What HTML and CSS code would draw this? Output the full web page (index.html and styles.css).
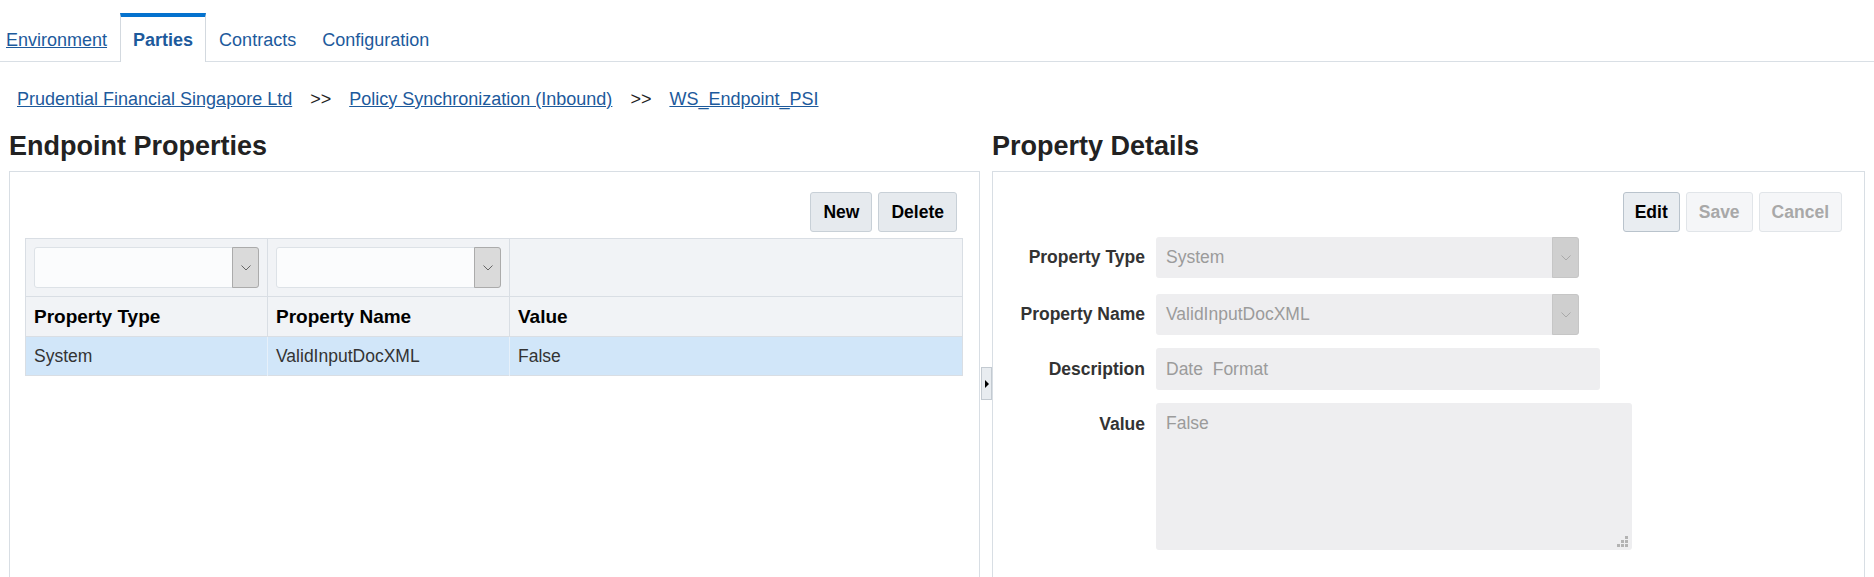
FILE: index.html
```html
<!DOCTYPE html>
<html>
<head>
  <title>Endpoint Properties</title>
  <link rel="stylesheet" href="styles.css">
</head>
<body>

  <nav class="tabs">
    <a class="tab first" href="#">Environment</a>
    <a class="tab active" href="#">Parties</a>
    <a class="tab" href="#">Contracts</a>
    <a class="tab" href="#">Configuration</a>
  </nav>

  <div class="crumbs">
    <a href="#">Prudential Financial Singapore Ltd</a><span class="sep">&gt;&gt;</span><a href="#">Policy Synchronization (Inbound)</a><span class="sep">&gt;&gt;</span><a href="#">WS_Endpoint_PSI</a>
  </div>

  <div class="main">

    <section class="col leftcol">
      <h2>Endpoint Properties</h2>
      <div class="panel">
        <div class="toolbar">
          <button>New</button>
          <button>Delete</button>
        </div>
        <table class="grid">
          <colgroup>
            <col class="c1">
            <col class="c2">
            <col>
          </colgroup>
          <tr class="filters">
            <td>
              <div class="select">
                <span class="seltext"></span>
                <span class="arrow"><svg width="10" height="6" viewBox="0 0 10 6"><path d="M0.5 0.5 L5 5 L9.5 0.5" fill="none" stroke="#666" stroke-width="1"/></svg></span>
              </div>
            </td>
            <td>
              <div class="select">
                <span class="seltext"></span>
                <span class="arrow"><svg width="10" height="6" viewBox="0 0 10 6"><path d="M0.5 0.5 L5 5 L9.5 0.5" fill="none" stroke="#666" stroke-width="1"/></svg></span>
              </div>
            </td>
            <td></td>
          </tr>
          <tr class="head">
            <th>Property Type</th>
            <th>Property Name</th>
            <th>Value</th>
          </tr>
          <tr class="row selected">
            <td>System</td>
            <td>ValidInputDocXML</td>
            <td>False</td>
          </tr>
        </table>
      </div>
    </section>

    <div class="splitter">
      <span class="toggle"><span class="tri"></span></span>
    </div>

    <section class="col rightcol">
      <h2>Property Details</h2>
      <div class="panel">
        <div class="toolbar">
          <button class="edit">Edit</button>
          <button disabled>Save</button>
          <button disabled>Cancel</button>
        </div>
        <form class="details">
          <label>Property Type</label>
          <div class="select off type">
            <span class="seltext">System</span>
            <span class="arrow"><svg width="10" height="6" viewBox="0 0 10 6"><path d="M0.5 0.5 L5 5 L9.5 0.5" fill="none" stroke="#a9a9a9" stroke-width="1"/></svg></span>
          </div>

          <label class="second">Property Name</label>
          <div class="select off type second">
            <span class="seltext">ValidInputDocXML</span>
            <span class="arrow"><svg width="10" height="6" viewBox="0 0 10 6"><path d="M0.5 0.5 L5 5 L9.5 0.5" fill="none" stroke="#a9a9a9" stroke-width="1"/></svg></span>
          </div>

          <label>Description</label>
          <input class="field desc" type="text" value="Date  Format" disabled>

          <label class="top">Value</label>
          <div class="area">
            <span class="areatext">False</span>
            <svg class="grip" width="11" height="11" viewBox="0 0 11 11">
              <rect x="8" y="0" width="3" height="3" fill="#b3b3b3"/>
              <rect x="4" y="4" width="3" height="3" fill="#b3b3b3"/>
              <rect x="8" y="4" width="3" height="3" fill="#b3b3b3"/>
              <rect x="0" y="8" width="3" height="3" fill="#b3b3b3"/>
              <rect x="4" y="8" width="3" height="3" fill="#b3b3b3"/>
              <rect x="8" y="8" width="3" height="3" fill="#b3b3b3"/>
            </svg>
          </div>
        </form>
      </div>
    </section>

  </div>

</body>
</html>
```

FILE: styles.css
```css
html, body{
    overflow: hidden;
}

body{
    margin: 0;
    font-family: "Liberation Sans", Arial, sans-serif;
    color: #333;
    background: #fff;
}

/* tabs */
.tabs{
    display: flex;
    padding-top: 13px;
    border-bottom: 1px solid #d9dfe5;
}

.tab{
    height: 42px;
    line-height: 41px;
    padding: 3px 12px 0;
    margin-bottom: -1px;
    border-top: 4px solid transparent;
    border-left: 1px solid transparent;
    border-right: 1px solid transparent;
    font-size: 18px;
    color: #1d5a9c;
    text-decoration: none;
}

.tab.first{
    padding-left: 5px;
    text-decoration: underline;
}

.tab.active{
    background: #fff;
    font-weight: bold;
    border-top-color: #0572ce;
    border-left-color: #d3d9df;
    border-right-color: #d3d9df;
}

/* breadcrumb */
.crumbs{
    margin-top: 26px;
    padding-left: 17px;
    font-size: 18px;
    line-height: 22px;
}

.crumbs a{
    color: #1d5a9c;
}

.crumbs .sep{
    margin: 0 18px;
    color: #222;
}

/* columns */
.main{
    display: flex;
    margin-top: 20px;
    padding: 0 9px;
}

.leftcol{
    width: 971px;
}

.rightcol{
    width: 873px;
}

.col h2{
    margin: 0 0 9px;
    font-size: 27px;
    line-height: 32px;
    font-weight: bold;
    color: #222;
}

.panel{
    height: 420px;
    border: 1px solid #d8dee4;
    padding: 20px 16px 0 15px;
}

.rightcol .panel{
    padding: 20px 22px 0 0;
}

.toolbar{
    display: flex;
    justify-content: flex-end;
    gap: 6px;
}

.leftcol .toolbar{
    padding-right: 6px;
    margin-bottom: 6px;
}

.toolbar button{
    height: 40px;
    padding: 0 12px;
    font-family: inherit;
    font-size: 17.5px;
    font-weight: bold;
    color: #000;
    background: #e6eaee;
    border: 1px solid #c8d0d7;
    border-radius: 3px;
}

.toolbar button.edit{
    padding: 0 11px;
    background: #e9edf1;
    border-color: #b9c3cc;
}

.toolbar button:disabled{
    color: #a8a8a8;
    background: #f5f6f8;
    border-color: #e1e5e9;
}

/* table */
.grid{
    width: 100%;
    border-collapse: collapse;
    border: 1px solid #d9dee4;
    table-layout: fixed;
}

.grid col.c1, .grid col.c2{
    width: 242px;
}

.grid td, .grid th{
    border-left: 1px solid #d9dee4;
}

.filters td{
    height: 41px;
    padding: 8px;
    background: #f1f3f6;
    border-bottom: 1px solid #d9dee4;
}

.head th{
    height: 39px;
    padding: 0 8px;
    text-align: left;
    font-size: 19px;
    font-weight: bold;
    color: #000;
    background: #f1f3f6;
    border-bottom: 1px solid #d9dee4;
}

.row td{
    height: 38px;
    padding: 0 8px;
    font-size: 17.5px;
    color: #333;
}

.row.selected td{
    background: #d1e6f9;
    border-left-color: #e6f0fa;
}

.row.selected td:first-child{
    border-left-color: #d9dee4;
}

/* selects */
.select{
    display: flex;
    height: 41px;
    box-sizing: border-box;
    background: #fbfcfd;
    border: 1px solid #dde2e7;
    border-radius: 3px;
}

.seltext{
    flex: 1;
    padding: 0 10px;
    line-height: 41px;
    font-size: 17.5px;
}

.arrow{
    display: flex;
    align-items: center;
    justify-content: center;
    width: 25px;
    margin: -1px -1px -1px 0;
    background: #dadada;
    border: 1px solid #ababab;
    border-radius: 0 3px 3px 0;
}

/* splitter */
.splitter{
    width: 12px;
}

.toggle{
    display: flex;
    align-items: center;
    justify-content: center;
    width: 9px;
    height: 31px;
    margin: 237px 0 0 1px;
    background: #e8ecf0;
    border: 1px solid #c3cad1;
}

.tri{
    width: 0;
    height: 0;
    border-left: 4px solid #000;
    border-top: 4px solid transparent;
    border-bottom: 4px solid transparent;
}

/* detail form */
.details{
    display: grid;
    grid-template-columns: 152px auto;
    column-gap: 11px;
    row-gap: 13px;
    margin-top: 5px;
    justify-items: start;
}

.details .second{
    margin-top: 3px;
}

.details label{
    justify-self: end;
    align-self: center;
    font-size: 17.5px;
    font-weight: bold;
    color: #333;
}

.details label.top{
    align-self: start;
    padding-top: 10px;
    line-height: 22px;
}

.select.off{
    background: #eeeef0;
    border: none;
    color: #9b9b9b;
}

.select.off .arrow{
    margin: 0;
    background: #cfcfcf;
    border: 1px solid #c6c6c6;
}

.select.off .seltext{
    padding-left: 10px;
}

.select.type{
    width: 423px;
}

.field{
    box-sizing: border-box;
    width: 444px;
    height: 42px;
    padding: 0 10px;
    font-family: inherit;
    font-size: 17.5px;
    color: #9b9b9b;
    background: #eeeef0;
    border: none;
    border-radius: 3px;
}

.area{
    position: relative;
    box-sizing: border-box;
    width: 476px;
    height: 147px;
    padding: 9px 10px;
    background: #eeeef0;
    border-radius: 3px;
    font-size: 17.5px;
    line-height: 22px;
    color: #9b9b9b;
}

.grip{
    position: absolute;
    right: 4px;
    bottom: 3px;
}
```
